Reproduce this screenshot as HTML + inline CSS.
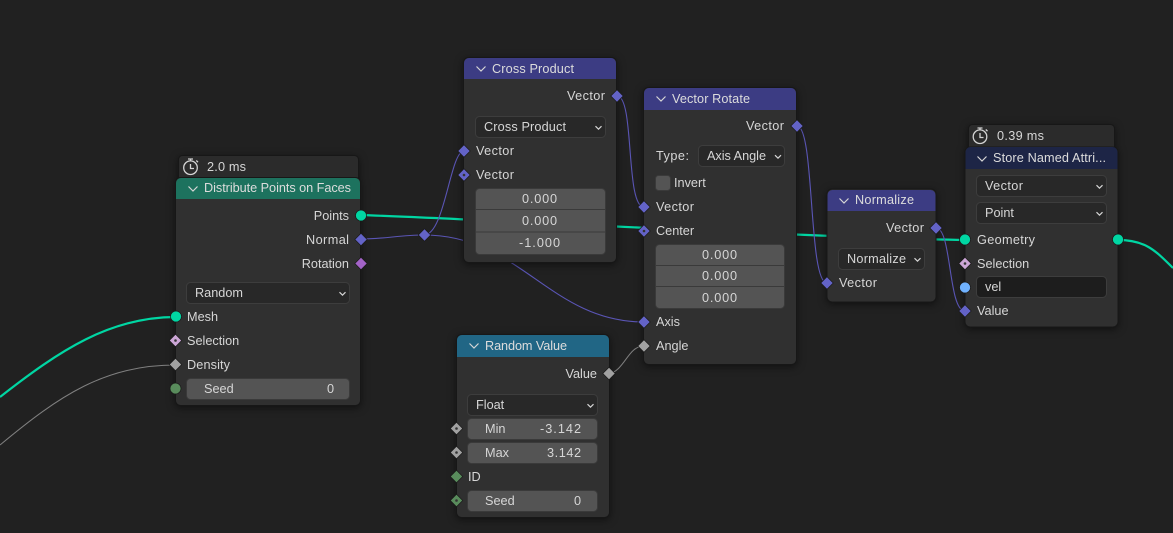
<!DOCTYPE html>
<html><head><meta charset="utf-8"><style>
html,body{margin:0;padding:0;background:#212121;width:1173px;height:533px;overflow:hidden}
svg{display:block}
text{font-family:"Liberation Sans",sans-serif;font-size:12.7px;fill:#d6d6d6}
.r{text-anchor:end}.c{text-anchor:middle}
.h{fill:#dcdcdc}
.n{fill:#303030;stroke:#171717;stroke-width:1}
.s{filter:drop-shadow(0 2px 4px rgba(0,0,0,.5))}
.f{fill:#545454;stroke:#3a3a3a}
.dd{fill:#282828;stroke:#3d3d3d}
.chev{fill:none;stroke:#d6d6d6;stroke-width:1.2}
.sep{stroke:#3a3a3a;stroke-width:1}
.l{fill:none}
.g{stroke:#00d6a3;stroke-width:2.2}
.p{stroke:#5a55b5;stroke-width:1.1}
.y{stroke:#808080;stroke-width:1}
.tb{fill:#2b2b2b;stroke:#171717}
</style></head><body>
<svg width="1173" height="533" viewBox="0 0 1173 533" xmlns="http://www.w3.org/2000/svg">
<defs>
<path id="d" d="M0-6.200L6.200 0 0 6.200-6.200 0Z" stroke="#1a1a1a" stroke-width=".7"/>
<circle id="o" r="5.500" stroke="#1a1a1a" stroke-width=".7"/>
<path id="ch" d="M-4.500-2L0 2.500 4.500-2" class="chev"/>
<path id="sc" d="M-3-1.300L0 1.700 3-1.300" class="chev"/>
<g id="timer" fill="none" stroke="#d4d4d4" stroke-width="1.3">
<circle cx="0" cy="1.200" r="6.800"/><path d="M0-2.500V2H3.500M-2.500-7.500H2.500M0-7.500V-5.500M5.800-6L7.500-4.300"/>
</g>
</defs>
<rect width="1173" height="533" fill="#212121"/>

<!-- links -->
<path class="l g" d="M361 215C500 220 800 237 965 240"/>
<path class="l g" d="M0 397C60 350 110 317 176 317"/>
<path class="l g" d="M1118 240C1145 240 1155 250 1173 268"/>
<path class="l y" d="M0 445C60 395 105 365 176 365"/>
<path class="l y" d="M609 374C625 370 628 346 644 346"/>
<path class="l p" d="M361 239C385 239 400 235 424 235C445 235 450 151 464 151"/>
<path class="l p" d="M424 235C520 235 550 322 644 322"/>
<path class="l p" d="M617 96C635 96 625 207 644 207"/>
<path class="l p" d="M797 126C815 126 808 283 827 283"/>
<path class="l p" d="M936 228C952 228 948 311 965 311"/>
<use href="#d" x="424.500" y="235" fill="#6363c7"/>

<!-- Distribute Points on Faces -->
<g class="s">
<rect class="tb" x="178.500" y="155.500" width="180" height="30" rx="4"/>
<rect class="n" x="175.500" y="177.500" width="185" height="228" rx="5"/>
</g>
<path d="M176 199V183a5 5 0 0 1 5-5H355a5 5 0 0 1 5 5V199Z" fill="#1d725e"/>
<use href="#timer" x="190.500" y="166.500"/>
<text x="207" y="171" textLength="39">2.0 ms</text>
<use href="#ch" x="193" y="188.500"/>
<text class="h" x="204" y="192" textLength="147">Distribute Points on Faces</text>
<text class="r" x="349" y="220">Points</text>
<text class="r" x="349" y="244" textLength="43">Normal</text>
<text class="r" x="349" y="268">Rotation</text>
<rect class="dd" x="186.500" y="282.500" width="163" height="21" rx="4"/>
<text x="195" y="297">Random</text><use href="#sc" x="342.500" y="293.500"/>
<text x="187" y="321">Mesh</text>
<text x="187" y="345">Selection</text>
<text x="187" y="369" textLength="43">Density</text>
<rect class="f" x="186.500" y="378.500" width="163" height="21" rx="4"/>
<text x="204" y="393">Seed</text><text class="r" x="334" y="393">0</text>
<use href="#o" x="361" y="215.500" fill="#00d6a3"/>
<use href="#d" x="361" y="239.500" fill="#6363c7"/>
<use href="#d" x="361" y="263.500" fill="#a363c7"/>
<use href="#o" x="176" y="316.500" fill="#00d6a3"/>
<use href="#d" x="175.500" y="340.500" fill="#cca6d6"/><circle cx="175.500" cy="340.500" r="1.300" fill="#333"/>
<use href="#d" x="175.500" y="364.500" fill="#a1a1a1"/>
<use href="#o" x="175.500" y="388.500" fill="#598c5c"/>

<!-- Cross Product -->
<g class="s"><rect class="n" x="463.500" y="57.500" width="153" height="205" rx="5"/></g>
<path d="M464 79V63a5 5 0 0 1 5-5H611a5 5 0 0 1 5 5V79Z" fill="#3c3c83"/>
<use href="#ch" x="481" y="68.500"/>
<text class="h" x="492" y="73" textLength="82">Cross Product</text>
<text class="r" x="605" y="100" textLength="38">Vector</text>
<rect class="dd" x="475.500" y="116.500" width="130" height="21" rx="4"/>
<text x="484" y="131" textLength="82">Cross Product</text><use href="#sc" x="598.500" y="127.500"/>
<text x="476" y="155" textLength="38">Vector</text>
<text x="476" y="179" textLength="38">Vector</text>
<rect class="f" x="475.500" y="188.500" width="130" height="66" rx="4"/>
<path class="sep" d="M476 209.500H605M476 232H605"/>
<text x="522" y="203" textLength="35">0.000</text>
<text x="522" y="225" textLength="35">0.000</text>
<text x="519" y="247" textLength="41">-1.000</text>
<use href="#d" x="617" y="96" fill="#6363c7"/>
<use href="#d" x="464" y="151" fill="#6363c7"/>
<use href="#d" x="464" y="175" fill="#6363c7"/><circle cx="464" cy="175" r="1.300" fill="#333"/>

<!-- Vector Rotate -->
<g class="s"><rect class="n" x="643.500" y="87.500" width="153" height="277" rx="5"/></g>
<path d="M644 110V93a5 5 0 0 1 5-5H791a5 5 0 0 1 5 5V110Z" fill="#3c3c83"/>
<use href="#ch" x="661" y="98.500"/>
<text class="h" x="672" y="103" textLength="78">Vector Rotate</text>
<text class="r" x="784" y="130" textLength="38">Vector</text>
<text x="656" y="160" textLength="33">Type:</text>
<rect class="dd" x="698.500" y="145.500" width="86" height="21" rx="4"/>
<text x="707" y="160" textLength="59">Axis Angle</text><use href="#sc" x="778" y="156.500"/>
<rect x="655.500" y="175.500" width="15" height="15" rx="3" fill="#545454" stroke="#3a3a3a"/>
<text x="674" y="187">Invert</text>
<text x="656" y="211" textLength="38">Vector</text>
<text x="656" y="235">Center</text>
<rect class="f" x="655.500" y="244.500" width="129" height="64" rx="4"/>
<path class="sep" d="M656 265.500H784M656 286.500H784"/>
<text x="702" y="259" textLength="35">0.000</text>
<text x="702" y="280" textLength="35">0.000</text>
<text x="702" y="302" textLength="35">0.000</text>
<text x="656" y="326">Axis</text>
<text x="656" y="350">Angle</text>
<use href="#d" x="797" y="126" fill="#6363c7"/>
<use href="#d" x="644" y="207" fill="#6363c7"/>
<use href="#d" x="644" y="231" fill="#6363c7"/><circle cx="644" cy="231" r="1.300" fill="#333"/>
<use href="#d" x="644" y="322" fill="#6363c7"/>
<use href="#d" x="644" y="346" fill="#a1a1a1"/>

<!-- Normalize -->
<g class="s"><rect class="n" x="827" y="189" width="109" height="113" rx="5"/></g>
<path d="M827.500 211V195a5 5 0 0 1 5-5H930.500a5 5 0 0 1 5 5V211Z" fill="#3c3c83"/>
<use href="#ch" x="844" y="200.500"/>
<text class="h" x="855" y="204" textLength="59">Normalize</text>
<text class="r" x="924" y="232" textLength="38">Vector</text>
<rect class="dd" x="838.500" y="248.500" width="86" height="21" rx="4"/>
<text x="847" y="263" textLength="59">Normalize</text><use href="#sc" x="917.500" y="259.500"/>
<text x="839" y="287" textLength="38">Vector</text>
<use href="#d" x="936" y="228" fill="#6363c7"/>
<use href="#d" x="827" y="283" fill="#6363c7"/>

<!-- Store Named Attribute -->
<g class="s">
<rect class="tb" x="968.500" y="124.500" width="146" height="30" rx="4"/>
<rect class="n" x="965" y="147" width="153" height="180" rx="5"/>
</g>
<path d="M965.500 169V152a5 5 0 0 1 5-5H1112.500a5 5 0 0 1 5 5V169Z" fill="#1d2546"/>
<use href="#timer" x="980" y="135.500"/>
<text x="997" y="140" textLength="47">0.39 ms</text>
<use href="#ch" x="982" y="158.500"/>
<text class="h" x="993" y="162" textLength="113">Store Named Attri...</text>
<rect class="dd" x="976.500" y="175.500" width="130" height="21" rx="4"/>
<text x="985" y="190" textLength="38">Vector</text><use href="#sc" x="1099.500" y="186.500"/>
<rect class="dd" x="976.500" y="202.500" width="130" height="21" rx="4"/>
<text x="985" y="217">Point</text><use href="#sc" x="1099.500" y="213.500"/>
<text x="977" y="244" textLength="58">Geometry</text>
<text x="977" y="268">Selection</text>
<rect x="976.500" y="276.500" width="130" height="21" rx="4" fill="#1d1d1d" stroke="#3d3d3d"/>
<text x="985" y="291">vel</text>
<text x="977" y="315">Value</text>
<use href="#o" x="965" y="239.500" fill="#00d6a3"/>
<use href="#o" x="1118" y="239.500" fill="#00d6a3"/>
<use href="#d" x="965" y="263.500" fill="#cca6d6"/><circle cx="965" cy="263.500" r="1.300" fill="#333"/>
<use href="#o" x="965" y="287.500" fill="#70b2ff"/>
<use href="#d" x="965" y="311" fill="#6363c7"/>

<!-- Random Value -->
<g class="s"><rect class="n" x="456.500" y="334.500" width="153" height="183" rx="5"/></g>
<path d="M457 357V340a5 5 0 0 1 5-5H604a5 5 0 0 1 5 5V357Z" fill="#216685"/>
<use href="#ch" x="474" y="345.500"/>
<text class="h" x="485" y="350" textLength="82">Random Value</text>
<text class="r" x="597" y="378">Value</text>
<rect class="dd" x="467.500" y="394.500" width="130" height="21" rx="4"/>
<text x="476" y="409">Float</text><use href="#sc" x="590.500" y="405.500"/>
<rect class="f" x="467.500" y="418.500" width="130" height="21" rx="4"/>
<text x="485" y="433">Min</text><text x="540" y="433" textLength="41">-3.142</text>
<rect class="f" x="467.500" y="442.500" width="130" height="21" rx="4"/>
<text x="485" y="457">Max</text><text x="547" y="457" textLength="34">3.142</text>
<text x="468" y="481">ID</text>
<rect class="f" x="467.500" y="490.500" width="130" height="21" rx="4"/>
<text x="485" y="505">Seed</text><text class="r" x="581" y="505">0</text>
<use href="#d" x="609" y="373.500" fill="#a1a1a1"/>
<use href="#d" x="456.500" y="428.500" fill="#a1a1a1"/><circle cx="456.500" cy="428.500" r="1.300" fill="#333"/>
<use href="#d" x="456.500" y="452.500" fill="#a1a1a1"/><circle cx="456.500" cy="452.500" r="1.300" fill="#333"/>
<use href="#d" x="456.500" y="476.500" fill="#598c5c"/>
<use href="#d" x="456.500" y="500.500" fill="#598c5c"/><circle cx="456.500" cy="500.500" r="1.300" fill="#333"/>
</svg>
</body></html>
